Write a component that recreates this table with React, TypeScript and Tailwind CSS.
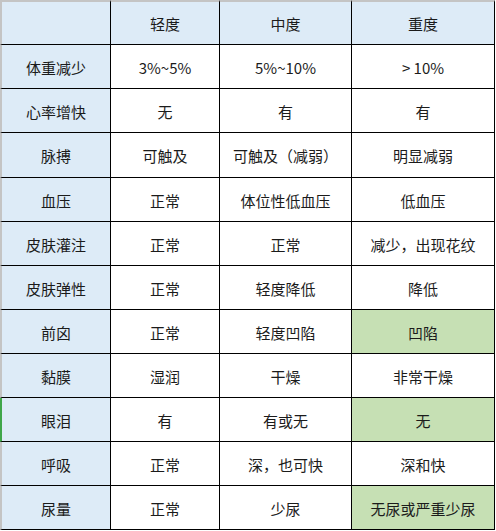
import React from "react";

type Row = { label: string; cells: [string, string, string]; green?: boolean[]; h: string; edge?: boolean };

const rows: Row[] = [
  { label: "体重减少", cells: ["3%~5%", "5%~10%", "> 10%"], h: "h-[44px]" },
  { label: "心率增快", cells: ["无", "有", "有"], h: "h-[44px]" },
  { label: "脉搏", cells: ["可触及", "可触及（减弱）", "明显减弱"], h: "h-[45px]" },
  { label: "血压", cells: ["正常", "体位性低血压", "低血压"], h: "h-[44px]" },
  { label: "皮肤灌注", cells: ["正常", "正常", "减少，出现花纹"], h: "h-[44px]" },
  { label: "皮肤弹性", cells: ["正常", "轻度降低", "降低"], h: "h-[44px]" },
  { label: "前囟", cells: ["正常", "轻度凹陷", "凹陷"], green: [false, false, true], h: "h-[44px]" },
  { label: "黏膜", cells: ["湿润", "干燥", "非常干燥"], h: "h-[44px]" },
  { label: "眼泪", cells: ["有", "有或无", "无"], green: [false, false, true], h: "h-[44px]", edge: true },
  { label: "呼吸", cells: ["正常", "深，也可快", "深和快"], h: "h-[44px]" },
  { label: "尿量", cells: ["正常", "少尿", "无尿或严重少尿"], green: [false, false, true], h: "h-[44px]" },
];

const font = { fontFamily: '"Noto Sans CJK SC", "Noto Sans", sans-serif' };

export default function App() {
  return (
    <div className="w-[496px] h-[531px] bg-white text-[15px] text-[#1b1b1b]" style={font}>
      <div className="grid grid-cols-[111px_109px_132px_143px] w-[495px]">
        <div className="h-[45px] bg-[#ddebf7] border-t-2 border-l-2 border-t-[#c4c4c4] border-l-[#c4c4c4] border-r border-b border-r-black border-b-black" />
        {["轻度", "中度", "重度"].map((t) => (
          <div
            key={t}
            className="h-[45px] bg-[#ddebf7] border-t-2 border-t-[#c4c4c4] border-r border-b border-r-black border-b-black flex items-center justify-center pt-[3px]"
          >
            {t}
          </div>
        ))}
        {rows.map((r) => (
          <React.Fragment key={r.label}>
            <div
              className={`${r.h} bg-[#ddebf7] border-l-2 ${r.edge ? "border-l-[#3fa64a]" : "border-l-[#c4c4c4]"} border-r border-b border-r-black border-b-black flex items-center justify-center pt-[3px]`}
            >
              {r.label}
            </div>
            {r.cells.map((c, i) => (
              <div
                key={i}
                className={`${r.h} ${r.green && r.green[i] ? "bg-[#c6e0b4]" : "bg-white"} border-r border-b border-r-black border-b-black flex items-center justify-center pt-[3px] whitespace-pre`}
              >
                {c}
              </div>
            ))}
          </React.Fragment>
        ))}
      </div>
    </div>
  );
}
